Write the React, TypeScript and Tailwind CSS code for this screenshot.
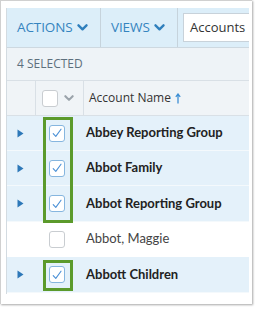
import React from "react";

const Chevron = ({ color, size = 11 }: { color: string; size?: number }) => (
  <svg width={size} height={size * 0.65} viewBox="0 0 12 8" fill="none">
    <path d="M1.5 1.5 L6 6 L10.5 1.5" stroke={color} strokeWidth="2.6" strokeLinecap="round" strokeLinejoin="round" />
  </svg>
);

const Check = ({ checked }: { checked: boolean }) =>
  checked ? (
    <div className="w-[16px] h-[17px] rounded-[3px] border-[1.5px] border-[#86b6df] bg-white flex items-center justify-center">
      <svg width="12" height="12" viewBox="0 0 12 12" fill="none">
        <path d="M2.2 6.6 L4.8 9.4 L10 2.2" stroke="#4a90d6" strokeWidth="1.1" strokeLinecap="round" strokeLinejoin="round" />
      </svg>
    </div>
  ) : (
    <div className="w-[16px] h-[17px] rounded-[3px] border border-[#c9cdd1] bg-white" />
  );

const Tri = () => (
  <svg width="7" height="9" viewBox="0 0 7 9">
    <path d="M0.5 0.5 L6.5 4.5 L0.5 8.5 Z" fill="#2d78b8" />
  </svg>
);

const rows = [
  { name: "Abbey Reporting Group", checked: true, h: "h-[35px]" },
  { name: "Abbot Family", checked: true, h: "h-[35px]" },
  { name: "Abbot Reporting Group", checked: true, h: "h-[36px]" },
  { name: "Abbot, Maggie", checked: false, h: "h-[35px]" },
  { name: "Abbott Children", checked: true, h: "h-[36px]" },
];

export default function App() {
  return (
    <div
      className="w-[261px] h-[313px] bg-white relative overflow-hidden"
      style={{ fontFamily: '"Open Sans", "Noto Sans", sans-serif' }}
    >
      <div className="w-[252px] h-[304px] bg-white border-l border-t border-[#d0d0d0] shadow-[1px_1px_2px_rgba(0,0,0,0.35)] relative pt-[7px] pl-[5px]">
        <div className="w-[243px] h-[286px] border-l border-[#d3dbe1] overflow-hidden flex flex-col">
          {/* toolbar */}
          <div className="h-[40px] shrink-0 bg-[#dceef9] border-b border-[#cdd8e0] flex items-stretch overflow-hidden">
            <div className="w-[94px] shrink-0 border-r border-[#c6d3dc] flex items-center pl-[10px] gap-[4px]">
              <span className="text-[13.5px] text-[#3584bf] tracking-[-0.1px]">ACTIONS</span>
              <Chevron color="#2f7fbc" />
            </div>
            <div className="w-[77px] shrink-0 border-r border-[#c6d3dc] flex items-center pl-[10px] gap-[4px]">
              <span className="text-[13.5px] text-[#3584bf] tracking-[-0.1px]">VIEWS</span>
              <Chevron color="#2f7fbc" />
            </div>
            <div className="shrink-0 flex items-center pl-[5px]">
              <div className="h-[29px] w-[110px] bg-white border border-[#c8d2da] flex items-center pl-[6px] whitespace-nowrap overflow-hidden">
                <span className="text-[13px] text-[#333]">Accounts</span>
              </div>
            </div>
          </div>
          {/* selected */}
          <div className="h-[33px] shrink-0 bg-[#eef3f7] border-b border-[#d9e0e6] flex items-center pl-[10px]">
            <span className="text-[12px] text-[#5d6f7d]">4 SELECTED</span>
          </div>
          {/* header */}
          <div className="h-[35px] shrink-0 bg-[#f0f4f7] border-b border-[#d9e0e6] flex items-stretch">
            <div className="w-[29px] shrink-0 border-r border-[#d9e0e6]" />
            <div className="w-[48px] shrink-0 border-r border-[#d9e0e6] flex items-center pl-[6px] gap-[6px]">
              <div className="w-[16px] h-[17px] rounded-[3px] border border-[#c9cdd1] bg-white" />
              <Chevron color="#9aa3aa" size={10} />
            </div>
            <div className="flex items-center pl-[5px] gap-[4px]">
              <span className="text-[12px] text-[#333]">Account Name</span>
              <svg width="6" height="11" viewBox="0 0 6 11">
                <path d="M3 10.5 V1.5 M0.8 3.8 L3 1 L5.2 3.8" stroke="#3d8fd4" strokeWidth="1.3" fill="none" />
              </svg>
            </div>
          </div>
          {/* rows */}
          {rows.map((r) => (
            <div
              key={r.name}
              className={`${r.h} shrink-0 flex items-center border-b ${
                r.checked ? "bg-[#e4f1fa] border-[#f4f9fc]" : "bg-white border-white"
              }`}
            >
              <div className="w-[29px] shrink-0 flex items-center pl-[10px]">{r.checked && <Tri />}</div>
              <div className="w-[48px] shrink-0 flex items-center pl-[13px]">
                <Check checked={r.checked} />
              </div>
              <span
                className={`pl-[2px] text-[13px] whitespace-nowrap ${
                  r.checked ? "font-bold text-[#222]" : "text-[#444]"
                }`}
                style={{ fontFamily: 'Lato, "Open Sans", sans-serif' }}
              >
                {r.name}
              </span>
            </div>
          ))}
        </div>
        {/* highlight boxes */}
        <div className="absolute left-[42px] top-[116px] w-[30px] h-[106px] border-[3px] border-[#5b9a2b]" />
        <div className="absolute left-[42px] top-[259px] w-[30px] h-[31px] border-[3px] border-[#5b9a2b]" />
      </div>
    </div>
  );
}
